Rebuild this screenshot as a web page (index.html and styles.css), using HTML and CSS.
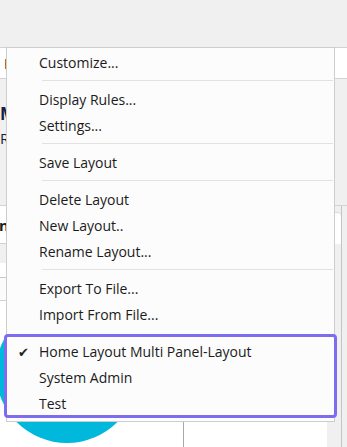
FILE: index.html
```html
<!DOCTYPE html>
<html>
<head>
    <title>Layout Menu</title>
    <link rel="stylesheet" href="styles.css">
</head>
<body>
    <div class="app">
        <div class="titlebar"></div>
        <div class="tabs">
            <span class="tab-label">Info</span>
        </div>
        <div class="workspace">
            <div class="main">
                <div class="profile">
                    <div class="profile-name">My Profile</div>
                    <div class="profile-role">Role</div>
                </div>
                <div class="card-header">
                    <span class="card-title">Account Details</span>
                </div>
                <div class="band"></div>
                <div class="subtab"></div>
                <div class="subrow"></div>
                <div class="content">
                    <div class="avatar-col">
                        <div class="avatar"></div>
                    </div>
                    <div class="detail-col"></div>
                </div>
            </div>
            <div class="rail">
                <div class="rail-top"></div>
                <div class="track">
                    <div class="thumb"></div>
                </div>
            </div>
        </div>

        <div class="menu">
            <div class="item">Customize...</div>
            <div class="sep"></div>
            <div class="item">Display Rules...</div>
            <div class="item">Settings...</div>
            <div class="sep"></div>
            <div class="item">Save Layout</div>
            <div class="sep"></div>
            <div class="item">Delete Layout</div>
            <div class="item">New Layout..</div>
            <div class="item">Rename Layout...</div>
            <div class="sep"></div>
            <div class="item">Export To File...</div>
            <div class="item">Import From File...</div>
            <div class="layouts">
                <div class="item checked"><span class="check">&#10004;</span>Home Layout Multi Panel-Layout</div>
                <div class="item">System Admin</div>
                <div class="item">Test</div>
            </div>
        </div>
    </div>
</body>
</html>
```

FILE: styles.css
```css
body {
    margin: 0;
    font-family: "Open Sans", "Noto Sans", sans-serif;
    color: #1b1b1b;
    background-color: #fff;
}
.app {
    position: relative;
    width: 347px;
    height: 447px;
    overflow: hidden;
    display: flex;
    flex-direction: column;
}
.titlebar {
    height: 47px;
    flex: none;
    background-color: #f0f0f0;
    border-bottom: 1px solid #d3d3d3;
}
.tabs {
    height: 30px;
    flex: none;
    background-color: #fff;
    border-bottom: 1px solid #d3d3d3;
    display: flex;
    align-items: center;
}
.tab-label {
    padding-left: 4px;
    font-size: 15px;
    font-weight: bold;
    color: #3a2a1a;
}
.workspace {
    flex: 1;
    display: flex;
    min-height: 0;
}
.main {
    flex: 1;
    display: flex;
    flex-direction: column;
}
.profile {
    height: 126px;
    flex: none;
    background-color: #f0f0f0;
    padding-top: 24px;
    box-sizing: border-box;
}
.profile-name {
    font-size: 17px;
    font-weight: bold;
    color: #14213d;
    line-height: 22px;
}
.profile-role {
    margin-top: 2px;
    font-size: 15px;
    color: #14213d;
    line-height: 22px;
}
.card-header {
    height: 37px;
    flex: none;
    background-color: #fff;
    border-top: 1px solid #d3d3d3;
    border-bottom: 1px solid #d3d3d3;
    display: flex;
    align-items: center;
    overflow: hidden;
}
.card-title {
    margin-left: -46px;
    font-size: 15px;
    font-weight: bold;
    white-space: nowrap;
}
.band {
    height: 19px;
    flex: none;
    background-color: #f0f0f0;
}
.subtab {
    height: 14px;
    flex: none;
    background-color: #fff;
    border-bottom: 1px solid #c8c8c8;
}
.subrow {
    height: 22px;
    flex: none;
    background-color: #fbfbfb;
    border-bottom: 1px solid #d3d3d3;
}
.content {
    flex: 1;
    display: flex;
    background-color: #fff;
}
.avatar-col {
    width: 183px;
    flex: none;
    border-right: 1px solid #a8a8a8;
}
.avatar {
    width: 142px;
    height: 142px;
    margin-left: -4px;
    border-radius: 50%;
    background-color: #00b8db;
}
.detail-col {
    flex: 1;
}
.rail {
    width: 20px;
    flex: none;
    display: flex;
    flex-direction: column;
    background-color: #f0f0f0;
}
.rail-top {
    height: 126px;
    flex: none;
    border-bottom: 1px solid #d3d3d3;
}
.track {
    flex: 1;
    width: 15px;
    border-right: 1px solid #c4c4c4;
    padding-top: 6px;
    box-sizing: border-box;
}
.thumb {
    height: 31px;
    margin-left: 6px;
    background-color: #fff;
    border-radius: 0 4px 0 0;
    border-top: 1px solid #d8d8d8;
}

/* context menu over the page */
.menu {
    position: absolute;
    left: 6px;
    top: 47px;
    width: 329px;
    box-sizing: border-box;
    padding: 2px 0 3px;
    background-color: #fcfcfc;
    border: 1px solid #cdcdcd;
}
.item {
    position: relative;
    height: 26px;
    line-height: 26px;
    padding-left: 32px;
    font-size: 14px;
    white-space: nowrap;
}
.sep {
    height: 1px;
    margin: 4px 1px 6px 35px;
    background-color: #e2e2e2;
}
.layouts {
    margin: 6px -3px 0;
    padding-top: 2px;
    border: 3px solid #7b6cf0;
    border-radius: 4px;
    background-color: #fcfcfc;
}
.layouts .item:last-child {
    height: 24px;
}
.check {
    position: absolute;
    left: 11px;
    top: 0;
    font-size: 13px;
    color: #222;
}
```
